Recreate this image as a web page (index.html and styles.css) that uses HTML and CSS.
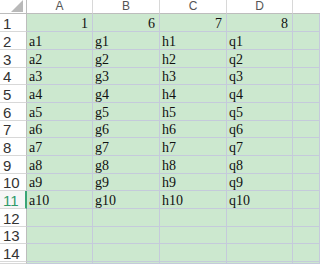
FILE: index.html
```html
<!DOCTYPE html>
<html>
<head>
<meta charset="utf-8">
<link rel="stylesheet" href="styles.css">
</head>
<body>
<div class="sheet">
  <div class="corner"><span class="tri"></span></div>
  <div class="ch">A</div><div class="ch">B</div><div class="ch">C</div><div class="ch">D</div><div class="ch last"></div>

  <div class="rh">1</div><div class="c num">1</div><div class="c num">6</div><div class="c num">7</div><div class="c num">8</div><div class="c"></div>
  <div class="rh">2</div><div class="c">a1</div><div class="c">g1</div><div class="c">h1</div><div class="c">q1</div><div class="c"></div>
  <div class="rh">3</div><div class="c">a2</div><div class="c">g2</div><div class="c">h2</div><div class="c">q2</div><div class="c"></div>
  <div class="rh">4</div><div class="c">a3</div><div class="c">g3</div><div class="c">h3</div><div class="c">q3</div><div class="c"></div>
  <div class="rh">5</div><div class="c">a4</div><div class="c">g4</div><div class="c">h4</div><div class="c">q4</div><div class="c"></div>
  <div class="rh">6</div><div class="c">a5</div><div class="c">g5</div><div class="c">h5</div><div class="c">q5</div><div class="c"></div>
  <div class="rh">7</div><div class="c">a6</div><div class="c">g6</div><div class="c">h6</div><div class="c">q6</div><div class="c"></div>
  <div class="rh">8</div><div class="c">a7</div><div class="c">g7</div><div class="c">h7</div><div class="c">q7</div><div class="c"></div>
  <div class="rh">9</div><div class="c">a8</div><div class="c">g8</div><div class="c">h8</div><div class="c">q8</div><div class="c"></div>
  <div class="rh">10</div><div class="c">a9</div><div class="c">g9</div><div class="c">h9</div><div class="c">q9</div><div class="c"></div>
  <div class="rh active">11</div><div class="c">a10</div><div class="c">g10</div><div class="c">h10</div><div class="c">q10</div><div class="c"></div>
  <div class="rh">12</div><div class="c"></div><div class="c"></div><div class="c"></div><div class="c"></div><div class="c"></div>
  <div class="rh">13</div><div class="c"></div><div class="c"></div><div class="c"></div><div class="c"></div><div class="c"></div>
  <div class="rh">14</div><div class="c"></div><div class="c"></div><div class="c"></div><div class="c"></div><div class="c"></div>
  <div class="rh"></div><div class="c"></div><div class="c"></div><div class="c"></div><div class="c"></div><div class="c"></div>
</div>
</body>
</html>
```
FILE: styles.css
```css
* { box-sizing: border-box; }
html, body { margin: 0; padding: 0; }
body {
  width: 320px;
  height: 264px;
  overflow: hidden;
  background: #cce8cf;
}
.sheet {
  display: grid;
  grid-template-columns: 27px 66px 67px 67px 66px 1fr;
  grid-template-rows: 14px 18px 18px 18px 17px 18px 18px 17px 18px 18px 17px 18px 18px 17px 18px 2px;
  width: 320px;
  height: 264px;
}
.corner {
  position: relative;
  background: #fff;
  border-right: 1px solid #bdbdbd;
  border-bottom: 1px solid #bdbdbd;
}
.tri {
  position: absolute;
  right: 3px;
  bottom: 1px;
  width: 0;
  height: 0;
  border-left: 12px solid transparent;
  border-bottom: 12px solid #b9b9b9;
}
.ch {
  background: #fff;
  border-right: 1px solid #d8d8d8;
  border-bottom: 1px solid #bdbdbd;
  font-family: "Liberation Sans Narrow", "Liberation Sans", sans-serif;
  font-size: 12px;
  color: #555;
  text-align: center;
  line-height: 12px;
}
.ch.last { border-right: none; }
.rh {
  background: #fff;
  border-right: 1px solid #bdbdbd;
  border-bottom: 1px solid #d8d8d8;
  font-family: "Liberation Sans Narrow", "Liberation Sans", sans-serif;
  font-size: 15px;
  color: #333;
  padding-left: 3px;
  display: flex;
  align-items: flex-end;
  line-height: 15px;
  overflow: hidden;
}
.rh.active {
  color: #2f9a69;
  background: #f6f6f6;
  border-right: 2px solid #3aa576;
}
.c {
  background: #cce8cf;
  border-right: 1px solid #c5cadb;
  border-bottom: 1px solid #c5cadb;
  font-family: "Liberation Serif", serif;
  font-size: 14px;
  color: #111;
  padding: 0 2px;
  display: flex;
  align-items: flex-end;
  line-height: 14px;
  white-space: nowrap;
  overflow: hidden;
}
.c.num { justify-content: flex-end; padding-right: 4px; }
```
